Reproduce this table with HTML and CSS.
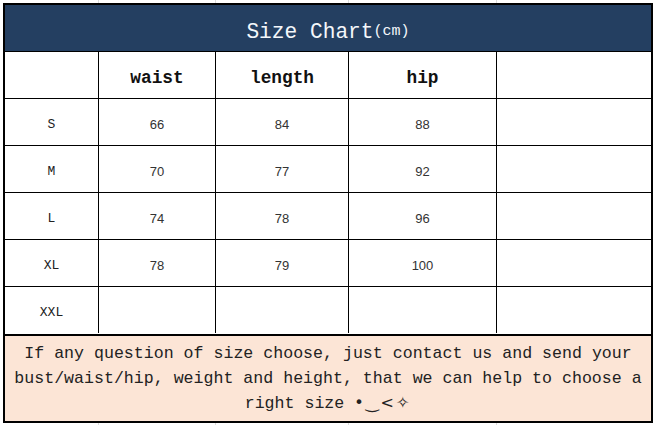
FILE: index.html
```html
<!DOCTYPE html>
<html lang="en">
<head>
<meta charset="utf-8">
<title>Size Chart</title>
<link rel="stylesheet" href="styles.css">
</head>
<body>
<div class="chart">
  <div class="title">Size Chart<span class="unit">(cm)</span></div>
  <div class="grid">
    <div class="cell"></div>
    <div class="cell head">waist</div>
    <div class="cell head">length</div>
    <div class="cell head">hip</div>
    <div class="cell last"></div>

    <div class="cell size">S</div>
    <div class="cell num">66</div>
    <div class="cell num">84</div>
    <div class="cell num">88</div>
    <div class="cell last"></div>

    <div class="cell size">M</div>
    <div class="cell num">70</div>
    <div class="cell num">77</div>
    <div class="cell num">92</div>
    <div class="cell last"></div>

    <div class="cell size">L</div>
    <div class="cell num">74</div>
    <div class="cell num">78</div>
    <div class="cell num">96</div>
    <div class="cell last"></div>

    <div class="cell size">XL</div>
    <div class="cell num">78</div>
    <div class="cell num">79</div>
    <div class="cell num">100</div>
    <div class="cell last"></div>

    <div class="cell size bottom">XXL</div>
    <div class="cell bottom"></div>
    <div class="cell bottom"></div>
    <div class="cell bottom"></div>
    <div class="cell last bottom"></div>
  </div>
  <div class="note">If any question of size choose, just contact us and send your bust/waist/hip, weight and height, that we can help to choose a right size <span class="emo">•‿&lt;✧</span></div>
</div>
</body>
</html>
```

FILE: styles.css
```css
html, body {
  margin: 0;
  padding: 0;
}

body {
  width: 656px;
  height: 425px;
  padding: 3px 0 0 3px;
  box-sizing: border-box;
  background-color: #ffffff;
  background-image:
    linear-gradient(#dcdcdc, #dcdcdc),
    linear-gradient(#dcdcdc, #dcdcdc),
    linear-gradient(#dcdcdc, #dcdcdc),
    linear-gradient(#dcdcdc, #dcdcdc),
    linear-gradient(to bottom, transparent 50px, #dcdcdc 50px, #dcdcdc 51px, transparent 51px);
  background-size: 1px 100%, 1px 100%, 1px 100%, 1px 100%, 100% 47px;
  background-position: 98px 0, 215px 0, 348px 0, 496px 0, 0 4px;
  background-repeat: no-repeat, no-repeat, no-repeat, no-repeat, repeat-y;
  font-family: "Liberation Mono", "DejaVu Sans Mono", monospace;
  color: #1a1a1a;
}

.chart {
  width: 650px;
  border: 2px solid #000;
  box-sizing: border-box;
  background: #fff;
  display: flex;
  flex-direction: column;
}

.title {
  height: 47px;
  box-sizing: border-box;
  border-bottom: 1px solid #000;
  background: #243f61;
  color: #f4f7fb;
  font-size: 21.2px;
  display: flex;
  align-items: center;
  justify-content: center;
  padding-top: 7px;
}

.unit {
  font-size: 15px;
}

.grid {
  display: grid;
  grid-template-columns: 94px 117px 133px 148px 154px;
  grid-auto-rows: 47px;
}

.cell {
  box-sizing: border-box;
  border-right: 1px solid #000;
  border-bottom: 1px solid #000;
  display: flex;
  align-items: center;
  justify-content: center;
  padding-top: 4px;
}

.cell.last {
  border-right: none;
}

.cell.bottom {
  border-bottom: none;
  height: 46px;
}

.head {
  font-weight: bold;
  font-size: 17.8px;
  color: #111;
  padding-top: 5px;
}

.size {
  font-size: 13px;
  color: #222;
}

.num {
  font-family: "Liberation Sans", Arial, sans-serif;
  font-size: 13px;
  color: #333;
}

.note {
  border-top: 2px solid #000;
  height: 87px;
  box-sizing: border-box;
  background: #fce5d6;
  font-size: 16.6px;
  line-height: 25px;
  text-align: center;
  padding: 5px 4px 0;
  color: #222;
}

.emo {
  display: inline-block;
  font-family: "DejaVu Sans", sans-serif;
  font-size: 16px;
  line-height: 20px;
  letter-spacing: 2px;
  vertical-align: baseline;
}
```
